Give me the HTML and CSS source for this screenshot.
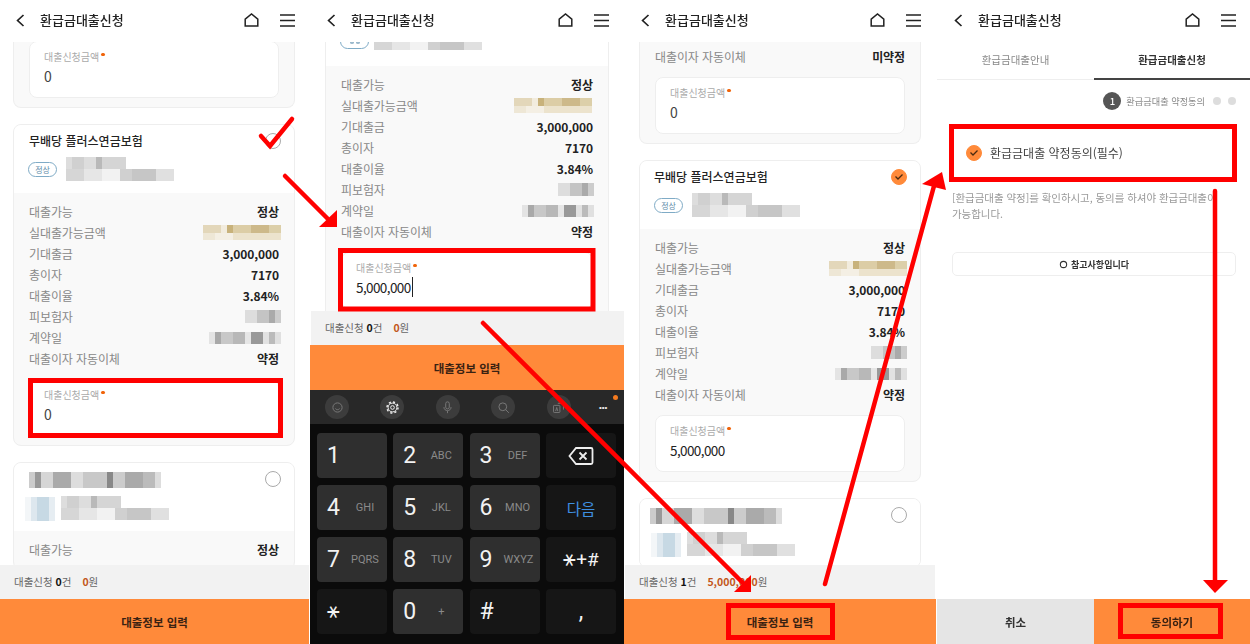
FILE: index.html
```html
<!DOCTYPE html>
<html lang="ko">
<head>
<meta charset="utf-8">
<title>환급금대출신청</title>
<link rel="stylesheet" href="styles.css">
</head>
<body>
<svg width="0" height="0" class="defs">
  <defs>
    <symbol id="i-back" viewBox="0 0 9 13"><path d="M7.500 1 1.600 6.500l5.900 5.500" fill="none" stroke="#222" stroke-width="1.700"/></symbol>
    <symbol id="i-home" viewBox="0 0 15 14"><path d="M1.200 13V6.100L7.500 1l6.300 5.100V13Z" fill="none" stroke="#222" stroke-width="1.500"/></symbol>
    <symbol id="i-menu" viewBox="0 0 15 13"><path d="M0 1h15M0 6.500h15M0 12h15" fill="none" stroke="#222" stroke-width="1.400"/></symbol>
    <symbol id="i-check" viewBox="0 0 10 8"><path d="M1.500 3.500 4 6l4.500-4.500" fill="none" stroke="#4a2a10" stroke-width="1.300"/></symbol>
  </defs>
</svg>

<main class="page">
  <!-- Phone 1 -->
  <section class="phone phone-a">
    <header class="bar">
      <svg class="ic-back"><use href="#i-back"/></svg>
      <h1 class="bar-title">환급금대출신청</h1>
      <svg class="ic-home"><use href="#i-home"/></svg>
      <svg class="ic-menu"><use href="#i-menu"/></svg>
    </header>
    <div class="scroll">
      <article class="card card-tail">
        <div class="amount"><label class="amount-label">대출신청금액<i class="dot"></i></label><div class="amount-value">0</div></div>
      </article>
      <article class="card">
        <div class="card-head">
          <div class="head-main">
            <h2 class="card-title">무배당 플러스연금보험</h2>
            <div class="meta"><span class="badge">정상</span><i class="mz mz-meta"></i></div>
          </div>
          <span class="radio"></span>
        </div>
        <div class="card-body">
          <div class="row"><span>대출가능</span><b>정상</b></div>
          <div class="row"><span>실대출가능금액</span><i class="mz mz-gold"></i></div>
          <div class="row"><span>기대출금</span><b>3,000,000</b></div>
          <div class="row"><span>총이자</span><b>7170</b></div>
          <div class="row"><span>대출이율</span><b>3.84%</b></div>
          <div class="row"><span>피보험자</span><i class="mz mz-name"></i></div>
          <div class="row"><span>계약일</span><i class="mz mz-date"></i></div>
          <div class="row"><span>대출이자 자동이체</span><b>약정</b></div>
          <div class="amount amount-gap"><label class="amount-label">대출신청금액<i class="dot"></i></label><div class="amount-value">0</div></div>
        </div>
      </article>
      <article class="card">
        <div class="card-head">
          <div class="head-main">
            <i class="mz mz-title"></i>
            <div class="meta"><i class="mz mz-logo"></i><i class="mz mz-meta"></i></div>
          </div>
          <span class="radio"></span>
        </div>
        <div class="card-body">
          <div class="row"><span>대출가능</span><b>정상</b></div>
        </div>
      </article>
    </div>
    <div class="summary">대출신청 <b>0</b>건 <em>0</em>원</div>
    <button class="cta">대출정보 입력</button>
  </section>

  <!-- Phone 2 -->
  <section class="phone phone-b">
    <header class="bar">
      <svg class="ic-back"><use href="#i-back"/></svg>
      <h1 class="bar-title">환급금대출신청</h1>
      <svg class="ic-home"><use href="#i-home"/></svg>
      <svg class="ic-menu"><use href="#i-menu"/></svg>
    </header>
    <div class="scroll">
      <article class="card card-scrolled">
        <div class="card-head card-head-cut">
          <div class="meta"><span class="badge-stub"><i></i><i></i></span><i class="mz mz-meta mz-meta-cut"></i></div>
        </div>
        <div class="card-body">
          <div class="row"><span>대출가능</span><b>정상</b></div>
          <div class="row"><span>실대출가능금액</span><i class="mz mz-gold"></i></div>
          <div class="row"><span>기대출금</span><b>3,000,000</b></div>
          <div class="row"><span>총이자</span><b>7170</b></div>
          <div class="row"><span>대출이율</span><b>3.84%</b></div>
          <div class="row"><span>피보험자</span><i class="mz mz-name"></i></div>
          <div class="row"><span>계약일</span><i class="mz mz-date"></i></div>
          <div class="row"><span>대출이자 자동이체</span><b>약정</b></div>
          <div class="amount amount-gap"><label class="amount-label">대출신청금액<i class="dot"></i></label><div class="amount-value amount-filled"><span class="caret">5,000,000</span></div></div>
        </div>
      </article>
    </div>
    <div class="summary">대출신청 <b>0</b>건 <em>0</em>원</div>
    <button class="cta">대출정보 입력</button>
    <div class="keyboard">
      <div class="kb-tools">
        <span class="tool"><svg viewBox="0 0 24 24"><circle cx="12" cy="12" r="6.500"/><path d="M9 13.500c1.500 2 4.500 2 6 0M9.500 10h.01M14.500 10h.01"/></svg></span>
        <span class="tool tool-on"><svg viewBox="0 0 24 24"><circle cx="12" cy="12" r="2.600"/><circle cx="12" cy="12" r="6.200"/><circle class="gear-teeth" cx="12" cy="12" r="7.800" pathLength="16"/></svg></span>
        <span class="tool"><svg viewBox="0 0 24 24"><rect x="9.500" y="4" width="5" height="10" rx="2.500"/><path d="M7 11.500c0 6.500 10 6.500 10 0M12 17v3"/></svg></span>
        <span class="tool"><svg viewBox="0 0 24 24"><circle cx="11" cy="11" r="5.500"/><path d="m15 15 4.500 4.500"/></svg></span>
        <span class="tool"><svg viewBox="0 0 24 24"><rect x="5" y="9" width="9" height="10" rx="1"/><path d="M11 6h8v9M8 17l1.500-5 1.500 5"/></svg></span>
        <span class="tool-more">•••</span>
        <i class="tool-dot"></i>
      </div>
      <div class="kb-keys">
        <div class="key"><span class="num">1</span></div>
        <div class="key"><span class="num">2</span><small>ABC</small></div>
        <div class="key"><span class="num">3</span><small>DEF</small></div>
        <div class="key key-fn key-center"><svg class="ic-del" viewBox="0 0 26 20"><path d="M8 2h15a1.500 1.500 0 0 1 1.500 1.500v13A1.500 1.500 0 0 1 23 18H8L1.500 10Z" fill="none" stroke="#eee" stroke-width="1.800"/><path d="m11.500 6.500 7 7m0-7-7 7" stroke="#eee" stroke-width="1.800"/></svg></div>
        <div class="key"><span class="num">4</span><small>GHI</small></div>
        <div class="key"><span class="num">5</span><small>JKL</small></div>
        <div class="key"><span class="num">6</span><small>MNO</small></div>
        <div class="key key-fn key-center key-next">다음</div>
        <div class="key"><span class="num">7</span><small>PQRS</small></div>
        <div class="key"><span class="num">8</span><small>TUV</small></div>
        <div class="key"><span class="num">9</span><small>WXYZ</small></div>
        <div class="key key-fn key-center key-sym"><span class="star">⚹</span>+#</div>
        <div class="key key-fn"><span class="num star">⚹</span></div>
        <div class="key"><span class="num">0</span><small>+</small></div>
        <div class="key key-fn"><span class="num">#</span></div>
        <div class="key key-fn key-center"><span class="num">,</span></div>
      </div>
    </div>
  </section>

  <!-- Phone 3 -->
  <section class="phone phone-c">
    <header class="bar">
      <svg class="ic-back"><use href="#i-back"/></svg>
      <h1 class="bar-title">환급금대출신청</h1>
      <svg class="ic-home"><use href="#i-home"/></svg>
      <svg class="ic-menu"><use href="#i-menu"/></svg>
    </header>
    <div class="scroll">
      <article class="card card-tail card-tail-row">
        <div class="row"><span>대출이자 자동이체</span><b>미약정</b></div>
        <div class="amount amount-gap"><label class="amount-label">대출신청금액<i class="dot"></i></label><div class="amount-value">0</div></div>
      </article>
      <article class="card">
        <div class="card-head">
          <div class="head-main">
            <h2 class="card-title">무배당 플러스연금보험</h2>
            <div class="meta"><span class="badge">정상</span><i class="mz mz-meta"></i></div>
          </div>
          <span class="radio radio-on"><svg><use href="#i-check"/></svg></span>
        </div>
        <div class="card-body">
          <div class="row"><span>대출가능</span><b>정상</b></div>
          <div class="row"><span>실대출가능금액</span><i class="mz mz-gold"></i></div>
          <div class="row"><span>기대출금</span><b>3,000,000</b></div>
          <div class="row"><span>총이자</span><b>7170</b></div>
          <div class="row"><span>대출이율</span><b>3.84%</b></div>
          <div class="row"><span>피보험자</span><i class="mz mz-name"></i></div>
          <div class="row"><span>계약일</span><i class="mz mz-date"></i></div>
          <div class="row"><span>대출이자 자동이체</span><b>약정</b></div>
          <div class="amount amount-gap"><label class="amount-label">대출신청금액<i class="dot"></i></label><div class="amount-value amount-filled">5,000,000</div></div>
        </div>
      </article>
      <article class="card">
        <div class="card-head">
          <div class="head-main">
            <i class="mz mz-title"></i>
            <div class="meta"><i class="mz mz-logo"></i><i class="mz mz-meta"></i></div>
          </div>
          <span class="radio"></span>
        </div>
      </article>
    </div>
    <div class="summary">대출신청 <b>1</b>건 <em>5,000,000</em>원</div>
    <button class="cta">대출정보 입력</button>
  </section>

  <!-- Phone 4 -->
  <section class="phone phone-d">
    <header class="bar">
      <svg class="ic-back"><use href="#i-back"/></svg>
      <h1 class="bar-title">환급금대출신청</h1>
      <svg class="ic-home"><use href="#i-home"/></svg>
      <svg class="ic-menu"><use href="#i-menu"/></svg>
    </header>
    <nav class="tabs">
      <a class="tab">환급금대출안내</a>
      <a class="tab tab-on">환급금대출신청</a>
    </nav>
    <div class="steps">
      <span class="step-num">1</span>
      <span class="step-name">환급금대출 약정동의</span>
      <i class="step-dot"></i>
      <i class="step-dot"></i>
    </div>
    <div class="agree">
      <span class="radio radio-on"><svg><use href="#i-check"/></svg></span>
      <span class="agree-text">환급금대출 약정동의(필수)</span>
    </div>
    <p class="desc">[환급금대출 약정]를 확인하시고, 동의를 하셔야 환급금대출이 가능합니다.</p>
    <button class="note"><svg viewBox="0 0 10 10"><circle cx="5" cy="5" r="3.500" fill="none" stroke="#333" stroke-width="1.200"/></svg>참고사항입니다</button>
    <div class="spacer"></div>
    <div class="actions">
      <button class="act act-cancel">취소</button>
      <button class="act act-ok">동의하기</button>
    </div>
  </section>
</main>

<svg class="marks" viewBox="0 0 1250 644" aria-hidden="true">
  <g fill="none" stroke="#f00" stroke-width="5">
    <rect x="30.500" y="380.500" width="250" height="55"/>
    <rect x="340.500" y="250.500" width="252.500" height="58.500"/>
    <rect x="728.500" y="605.500" width="104" height="32"/>
    <rect x="951.500" y="126.500" width="283" height="53"/>
    <rect x="1120.500" y="605.500" width="100" height="31"/>
    <path d="M261 136 270 146 292 119" stroke-linecap="round" stroke-width="4.500"/>
  </g>
  <g stroke="#f00" stroke-width="4.500" stroke-linecap="round">
    <path d="M285 176 328 219"/>
    <path d="M483 323 744 584"/>
    <path d="M825 584 934 186"/>
    <path d="M1215 191V582"/>
  </g>
  <g fill="#f00">
    <path d="M337 227H319L337 210Z"/>
    <path d="M751 592H734L751 575Z"/>
    <path d="M942 172 922 184 946 190Z"/>
    <path d="M1215 593 1203 580H1228Z"/>
  </g>
</svg>
</body>
</html>
```

FILE: styles.css
```css
* { box-sizing: border-box; }
html, body { margin: 0; padding: 0; background: #fff; }
body {
  width: 1250px;
  height: 644px;
  overflow: hidden;
  position: relative;
  font-family: "Noto Sans CJK KR", "Noto Sans", sans-serif;
  color: #222;
}
.defs { position: absolute; }
.page { display: flex; width: 1250px; height: 644px; filter: blur(0.35px); }

/* Phones */
.phone { display: flex; flex-direction: column; height: 644px; overflow: hidden; background: #fff; flex: none; }
.phone-a { width: 309px; margin-right: 1px; --left: 13px; --right: 14px; --bar-left: 16px; }
.phone-b { width: 314px; --left: 15px; --right: 15px; --bar-left: 17px; }
.phone-c { width: 312px; margin-right: 1px; --left: 15px; --right: 15px; --bar-left: 17px; }
.phone-d { width: 313px; --bar-left: 17px; }

/* Top bar */
.bar { flex: none; height: 42px; display: flex; align-items: center; padding: 0 15px 2px var(--bar-left); background: #fff; position: relative; z-index: 1; }
.ic-back { width: 9px; height: 13px; margin-right: 15px; }
.bar-title { margin: 0; flex: 1; font-size: 13px; font-weight: 500; line-height: 18px; color: #222; }
.ic-home { width: 15px; height: 14px; margin-right: 21px; }
.ic-menu { width: 15px; height: 13px; }
.phone-a .ic-menu, .phone-d .ic-menu { margin-right: -1px; }

/* Scrolling list */
.scroll { flex: 1; min-height: 0; overflow: hidden; display: flex; flex-direction: column; gap: 16px; padding: 0 var(--right) 0 var(--left); }
.card { flex: none; background: #f9f9f9; border: 1px solid #eeeeee; border-radius: 8px; overflow: hidden; }
.card-tail { border-top: 0; border-radius: 0 0 8px 8px; padding: 0 15px 10px; height: 66px; }
.phone-a .card-tail .amount { margin-top: -1px; }
.card-tail-row { height: 102px; padding-top: 4px; }
.card-scrolled { margin-top: -45px; }
.card-head { height: 68px; background: #fff; display: flex; justify-content: space-between; padding: 8px 13px 0 15px; }
.card-head-cut { padding-top: 24px; }
.head-main { display: flex; flex-direction: column; }
.card-title { margin: -1px 0 0; font-size: 12px; font-weight: 500; line-height: 18px; color: #222; white-space: nowrap; }
.phone-c .card-title { margin-left: -1px; }
.meta { display: flex; align-items: center; gap: 9px; margin-top: 7px; height: 24px; }
.badge { width: 29px; height: 15px; margin-left: -1px; border: 1px solid #7fabc6; border-radius: 8px; font-size: 8px; line-height: 13px; text-align: center; color: #5d8aa8; }
.badge-stub { width: 29px; height: 15px; margin-left: -1px; border: 1px solid #7fabc6; border-radius: 8px; display: flex; justify-content: center; align-items: center; gap: 2px; }
.badge-stub i { width: 4px; height: 3px; margin-top: 2px; background: #9bb9cc; border-radius: 50%; }
.radio { flex: none; width: 16px; height: 16px; border: 1px solid #aaa; border-radius: 50%; background: #fff; display: flex; align-items: center; justify-content: center; }
.radio-on { background: #ff8a3a; border-color: #ff8a3a; }
.radio-on svg { width: 10px; height: 8px; }

.card-body { padding: 8px 15px 9px; }
.row { height: 21px; display: flex; justify-content: space-between; align-items: center; font-size: 12px; color: #888; letter-spacing: -0.1px; }
.row b { font-weight: 700; color: #222; }

/* Amount field */
.amount { height: 57px; background: #fff; border: 1px solid #eeeeee; border-radius: 8px; padding: 8px 14px 0; }
.amount-gap { margin-top: 10px; }
.amount-label { display: block; font-size: 10px; line-height: 14px; color: #aaa; }
.dot { display: inline-block; width: 3.500px; height: 3.500px; margin-left: 2px; border-radius: 50%; background: #f0640a; vertical-align: 5px; }
.amount-value { margin-top: 2px; font-size: 14px; line-height: 20px; color: #444; }
.amount-filled { color: #222; font-size: 13.500px; letter-spacing: -0.6px; }
.caret { border-right: 1px solid #222; padding-right: 1px; }

/* Pixelated redactions */
.mz { display: block; flex: none; background-repeat: no-repeat; }
.mz-meta {
  width: 108px; height: 24px;
  background-image:
    linear-gradient(90deg, #ddd 0 6px, #d0d0d0 6px 18px, #ddd 18px 30px, #b9b9b9 30px 36px, #d5d5d5 36px 60px),
    linear-gradient(90deg, #d6d6d6 0 18px, #e6e6e6 18px 36px, #f2f2f2 36px 54px, #d0d0d0 54px 66px, #c6c6c6 66px 90px, #e0e0e0 90px 108px);
  background-size: 60px 12px, 108px 12px;
  background-position: 0 0, 0 12px;
}
.mz-meta-cut { margin-left: -4px; background-size: 0 0, 108px 12px; background-position: 0 0, 0 9px; }
.mz-gold {
  width: 78px; height: 15px; margin-right: -2px;
  background-image:
    linear-gradient(90deg, #e3d7ba 0 18px, #f2ecde 18px 24px, #c8b27b 24px 30px, #dccda6 30px 48px, #cdb98a 48px 66px, #dccfa9 66px 78px),
    linear-gradient(90deg, #eee7d6 0 12px, #f4efe4 12px 30px, #ece3cd 30px 78px);
  background-size: 78px 8px, 78px 7px;
  background-position: 0 0, 0 8px;
}
.mz-name {
  width: 36px; height: 13px; margin-right: -2px;
  background-image:
    linear-gradient(90deg, #ddd 0 12px, #c4c4c4 12px 24px, #aaa 24px 30px, #ccc 30px 36px);
}
.mz-date {
  width: 72px; height: 12px; margin-right: -2px;
  background-image:
    linear-gradient(90deg, #e4e4e4 0 6px, #a9a9a9 6px 12px, #c8c8c8 12px 24px, #b8b8b8 24px 36px, #e6e6e6 36px 42px, #999 42px 54px, #e2e2e2 54px 60px, #bbb 60px 66px, #e0e0e0 66px 72px);
}
.phone-b .mz-gold { margin-right: 1px; }
.phone-b .mz-name, .phone-b .mz-date { margin-right: -1px; }
.mz-title {
  width: 132px; height: 16px; margin-top: 1px;
  background-image:
    linear-gradient(90deg, #ccc 0 6px, #999 6px 12px, #d6d6d6 12px 24px, #aaa 24px 42px, #ddd 42px 54px, #c8c8c8 54px 78px, #888 78px 84px, #ccc 84px 96px, #aaa 96px 114px, #bbb 114px 126px, #ddd 126px 132px);
}
.phone-c .mz-title { margin-left: -5px; }
.mz-logo {
  width: 30px; height: 24px; margin-left: -4px; margin-right: -3px; margin-top: 2px;
  background-image:
    linear-gradient(90deg, #f3f6f8 0 6px, #dde7ee 6px 12px, #c7d9e4 12px 24px, #e6edf2 24px 30px);
}
.phone-a .card:last-child .meta, .phone-c .card:last-child .meta { margin-top: 8px; }

/* Footer */
.summary { flex: none; height: 34px; background: #f2f2f2; padding-left: 14px; font-size: 10.500px; line-height: 34px; color: #666; white-space: nowrap; }
.summary b { color: #111; font-weight: 700; }
.summary em { font-style: normal; font-weight: 700; color: #c2561a; margin-left: 8px; }
.cta { flex: none; height: 45px; width: 100%; border: 0; padding: 0; background: #ff8a3a; font-family: inherit; font-size: 11.500px; font-weight: 700; color: #3a2212; }
.phone-b .summary { margin-left: 1px; }
.phone-c .summary { margin: 0 1px; padding-left: 14px; }

/* Keyboard */
.keyboard { flex: none; height: 254px; background: #0b0b0b; }
.kb-tools { height: 34px; background: #282828; display: grid; grid-template-columns: repeat(5, 55.400px) 1fr; align-items: center; padding-left: 15px; position: relative; }
.tool { width: 24px; height: 24px; border-radius: 50%; background: #3c3c3c; display: flex; align-items: center; justify-content: center; }
.tool svg { width: 17px; height: 17px; fill: none; stroke: #777; stroke-width: 1.400; }
.tool-on svg { stroke: #eee; }
.gear-teeth { stroke-width: 2; stroke-dasharray: 1 1; }
.tool-more { font-family: "Liberation Sans", sans-serif; font-size: 8px; letter-spacing: 0; color: #eee; margin-left: -3px; }
.tool-dot { position: absolute; right: 6px; top: 5px; width: 5px; height: 5px; border-radius: 50%; background: #f47a1f; }
.kb-keys { display: grid; grid-template-columns: repeat(4, 70px); grid-auto-rows: 45px; gap: 7px 6.300px; padding: 9px 7px 0; }
.key { background: #2f2f2f; border-radius: 4px; display: grid; grid-template-columns: 24px 1fr; align-items: center; padding: 0 8px 0 10px; color: #eee; font-family: Roboto, sans-serif; }
.key-fn { background: #161616; }
.key-center { display: flex; justify-content: center; padding: 0; }
.num { font-size: 23px; line-height: 1; color: #f2f2f2; }
.key small { justify-self: center; font-size: 11px; color: #8a8a8a; white-space: nowrap; }
.ic-del { width: 26px; height: 20px; }
.key-next { font-family: "Noto Sans CJK KR", sans-serif; font-size: 15.500px; color: #3f8fe0; }
.key-sym { font-size: 19px; color: #f2f2f2; }
.star { font-family: "DejaVu Sans", sans-serif; font-size: 21px; line-height: 1; }

/* Agreement screen */
.tabs { flex: none; display: grid; grid-template-columns: 157px 1fr; height: 38px; }
.tab { font-size: 10.500px; line-height: 36px; text-align: center; color: #888; border-bottom: 1px solid #eee; }
.tab-on { color: #333; font-weight: 700; border-bottom: 2px solid #444; }
.steps { flex: none; display: flex; align-items: center; justify-content: flex-end; height: 26px; margin-top: 8px; padding-right: 14px; font-size: 9.200px; color: #888; }
.step-num { width: 18px; height: 18px; border-radius: 50%; background: #555; color: #fff; font-size: 9.500px; font-weight: 500; line-height: 18px; text-align: center; margin-right: 5px; }
.step-name { margin-right: 8px; white-space: nowrap; }
.step-dot { width: 8px; height: 8px; border-radius: 50%; background: #ddd; margin-left: 7px; }
.step-dot:first-of-type { margin-left: 0; }
.agree { flex: none; display: flex; align-items: center; gap: 8px; height: 53px; margin: 13px 14px 0 16px; padding-left: 13px; padding-bottom: 2px; }
.agree-text { font-size: 12px; line-height: 16px; color: #444; white-space: nowrap; }
.desc { flex: none; margin: 10px 20px 0 15px; font-size: 10.500px; line-height: 16px; color: #999; letter-spacing: -0.05px; word-break: keep-all; }
.note { flex: none; display: flex; align-items: center; justify-content: center; gap: 3px; height: 24px; margin: 30px 14px 0 15px; background: #fff; border: 1px solid #eee; border-radius: 5px; font-family: inherit; font-size: 9px; font-weight: 700; color: #333; }
.note svg { width: 9px; height: 9px; }
.spacer { flex: 1; }
.actions { flex: none; display: grid; grid-template-columns: 157px 1fr; height: 45px; }
.act { border: 0; padding: 0; font-family: inherit; font-size: 11.500px; font-weight: 700; color: #333; }
.act-cancel { background: #e5e5e5; }
.act-ok { background: #ff8a3a; color: #3a2212; }

/* Red annotations drawn over the screenshots */
.marks { position: absolute; left: 0; top: 0; width: 1250px; height: 644px; pointer-events: none; }
```
